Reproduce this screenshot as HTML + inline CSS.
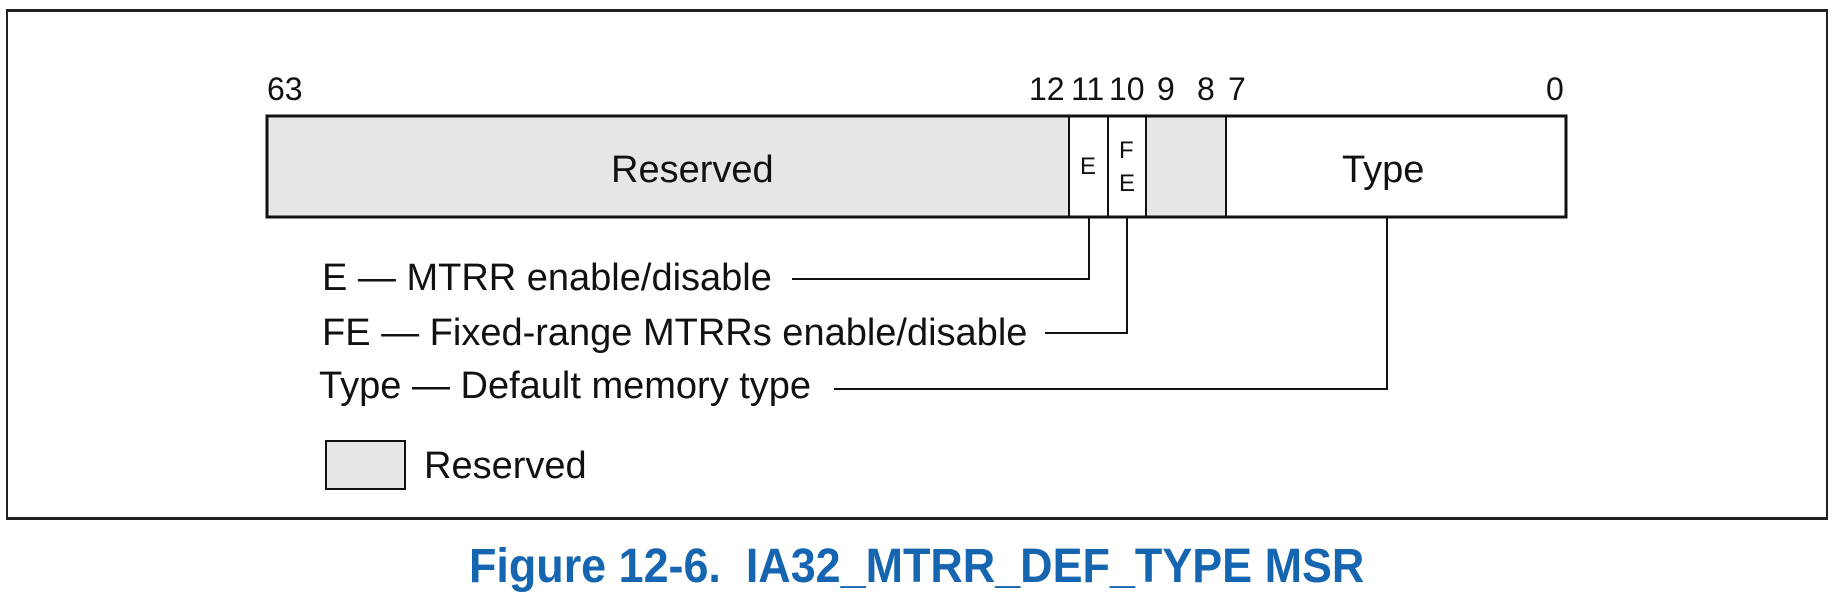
<!DOCTYPE html>
<html><head><style>
body{margin:0;width:1838px;height:594px;background:#fff;position:relative;overflow:hidden;font-family:"Liberation Sans",sans-serif;color:#111}
div{position:absolute}
.t{white-space:nowrap;line-height:1}
</style></head><body>
<div style="left:6px;top:9px;width:1818px;height:505px;border:2px solid #222;border-top-width:3px;border-bottom-width:3px"></div>
<svg width="1838" height="594" style="position:absolute;left:0;top:0">
<rect x="267" y="116" width="1299" height="101" fill="#fff" stroke="#111" stroke-width="3"/>
<rect x="268.5" y="117.5" width="800" height="98" fill="#e6e6e6"/>
<rect x="1146" y="117.5" width="80" height="98" fill="#e6e6e6"/>
<line x1="1069" y1="116" x2="1069" y2="217" stroke="#111" stroke-width="2"/>
<line x1="1108" y1="116" x2="1108" y2="217" stroke="#111" stroke-width="2"/>
<line x1="1146" y1="116" x2="1146" y2="217" stroke="#111" stroke-width="2"/>
<line x1="1226" y1="116" x2="1226" y2="217" stroke="#111" stroke-width="2"/>
<polyline points="1089,217 1089,279 792,279" fill="none" stroke="#111" stroke-width="2"/>
<polyline points="1127,217 1127,333 1045,333" fill="none" stroke="#111" stroke-width="2"/>
<polyline points="1387,217 1387,389 834,389" fill="none" stroke="#111" stroke-width="2"/>
<rect x="326" y="441" width="79" height="48" fill="#e6e6e6" stroke="#111" stroke-width="2"/>
</svg>
<div class="t" style="left:267px;top:73px;font-size:32px">63</div>
<div class="t" style="left:1029px;top:73px;font-size:32px">12</div>
<div class="t" style="left:1071px;top:73px;font-size:32px">11</div>
<div class="t" style="left:1109px;top:73px;font-size:32px">10</div>
<div class="t" style="left:1157px;top:73px;font-size:32px">9</div>
<div class="t" style="left:1197px;top:73px;font-size:32px">8</div>
<div class="t" style="left:1228px;top:73px;font-size:32px">7</div>
<div class="t" style="left:1546px;top:73px;font-size:32px">0</div>
<div class="t" style="left:611px;top:151px;font-size:38px">Reserved</div>
<div class="t" style="left:1342px;top:151px;font-size:38px">Type</div>
<div class="t" style="left:1080px;top:155px;font-size:24px">E</div>
<div class="t" style="left:1119px;top:139px;font-size:24px">F</div>
<div class="t" style="left:1119px;top:172px;font-size:24px">E</div>
<div class="t" style="left:322px;top:259px;font-size:38px">E — MTRR enable/disable</div>
<div class="t" style="left:322px;top:314px;font-size:38px">FE — Fixed-range MTRRs enable/disable</div>
<div class="t" style="left:319px;top:367px;font-size:38px">Type — Default memory type</div>
<div class="t" style="left:424px;top:447px;font-size:38px">Reserved</div>
<div class="t" style="left:469px;top:543px;font-size:48px;font-weight:bold;color:#1565b0;transform:scaleX(0.935);transform-origin:left top">Figure 12-6.&nbsp; IA32_MTRR_DEF_TYPE MSR</div>
</body></html>
